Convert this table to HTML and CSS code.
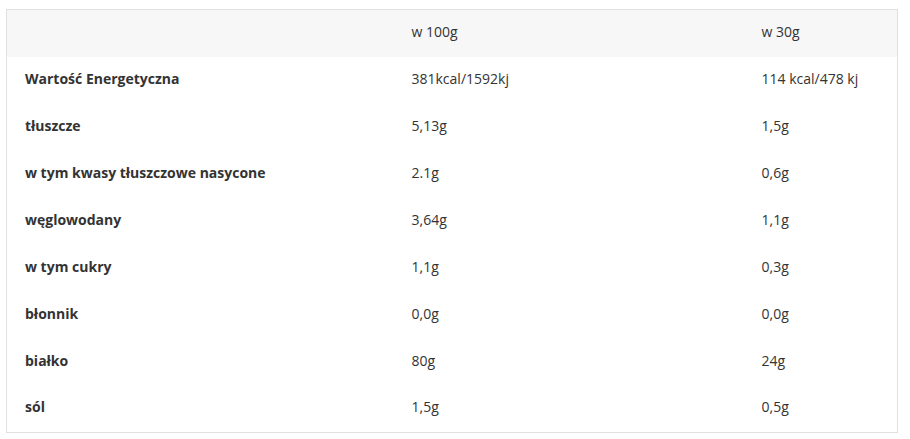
FILE: index.html
```html
<!DOCTYPE html>
<html lang="pl">
<head>
<meta charset="utf-8">
<link rel="stylesheet" href="styles.css">
</head>
<body>
<table class="nutri">
  <colgroup>
    <col class="c1"><col class="c2"><col class="c3">
  </colgroup>
  <thead>
    <tr><th></th><th>w 100g</th><th>w 30g</th></tr>
  </thead>
  <tbody>
    <tr><td class="name">Wartość Energetyczna</td><td>381kcal/1592kj</td><td>114 kcal/478 kj</td></tr>
    <tr><td class="name">tłuszcze</td><td>5,13g</td><td>1,5g</td></tr>
    <tr><td class="name">w tym kwasy tłuszczowe nasycone</td><td>2.1g</td><td>0,6g</td></tr>
    <tr><td class="name">węglowodany</td><td>3,64g</td><td>1,1g</td></tr>
    <tr><td class="name">w tym cukry</td><td>1,1g</td><td>0,3g</td></tr>
    <tr><td class="name">błonnik</td><td>0,0g</td><td>0,0g</td></tr>
    <tr><td class="name">białko</td><td>80g</td><td>24g</td></tr>
    <tr><td class="name">sól</td><td>1,5g</td><td>0,5g</td></tr>
  </tbody>
</table>
</body>
</html>
```
FILE: styles.css
```css
html, body {
  margin: 0;
  background: #fff;
}
body {
  padding: 9px 12px 0 6px;
  font-family: "Open Sans", "Liberation Sans", sans-serif;
  font-size: 14px;
  color: #333;
}
.nutri {
  width: 892px;
  border-collapse: collapse;
  border: 1px solid #e1e1e1;
  table-layout: fixed;
}
.c1 { width: 387px; }
.c2 { width: 350px; }
.c3 { width: auto; }
.nutri th,
.nutri td {
  box-sizing: border-box;
  height: 47px;
  padding: 0 0 3px 18px;
  text-align: left;
  vertical-align: middle;
  font-weight: 400;
  line-height: 20px;
}
.nutri thead tr {
  background: #f7f7f7;
}
.nutri td.name {
  font-weight: 700;
}
```
